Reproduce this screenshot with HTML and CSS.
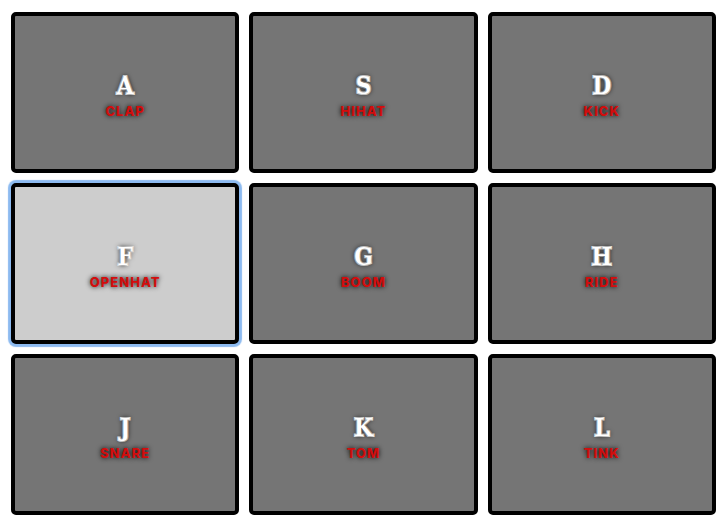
FILE: index.html
```html
<!DOCTYPE html>
<html lang="en">
<head>
<meta charset="utf-8">
<title>Drum Kit</title>
<link rel="stylesheet" href="styles.css">
</head>
<body>
<main class="keys">
<button class="key" type="button"><kbd>A</kbd><span class="sound">CLAP</span></button>
<button class="key" type="button"><kbd>S</kbd><span class="sound">HIHAT</span></button>
<button class="key" type="button"><kbd>D</kbd><span class="sound">KICK</span></button>
<button class="key active" type="button"><kbd>F</kbd><span class="sound">OPENHAT</span></button>
<button class="key" type="button"><kbd>G</kbd><span class="sound">BOOM</span></button>
<button class="key" type="button"><kbd>H</kbd><span class="sound">RIDE</span></button>
<button class="key" type="button"><kbd>J</kbd><span class="sound">SNARE</span></button>
<button class="key" type="button"><kbd>K</kbd><span class="sound">TOM</span></button>
<button class="key" type="button"><kbd>L</kbd><span class="sound">TINK</span></button>
</main>
</body>
</html>
```
FILE: styles.css
```css
* { box-sizing: border-box; }
body { margin: 0; background: #fff; }
.keys {
  display: grid;
  grid-template-columns: repeat(3, 1fr);
  grid-auto-rows: 1fr;
  gap: 10px;
  min-height: 100vh;
  padding: 12px 8px 12px 11px;
}
.key {
  display: flex;
  flex-direction: column;
  align-items: center;
  justify-content: center;
  padding: 4px 0 0;
  border: 4px solid #000;
  border-radius: 5px;
  background: #757575;
  color: #fff;
  text-shadow: 0 0 5px #000;
}
.key kbd {
  font: bold 24px/32px "DejaVu Serif Condensed", "DejaVu Serif", serif;
  -webkit-text-stroke: 2px #fff;
  paint-order: stroke fill;
}
.sound {
  font: 800 13px/18px Inter, "Liberation Sans", sans-serif;
  letter-spacing: 1px;
  color: #d20d0d;
}
.active {
  background: #cdcdcd;
  box-shadow: 0 0 1px 3px #8cbaf0;
}
```
